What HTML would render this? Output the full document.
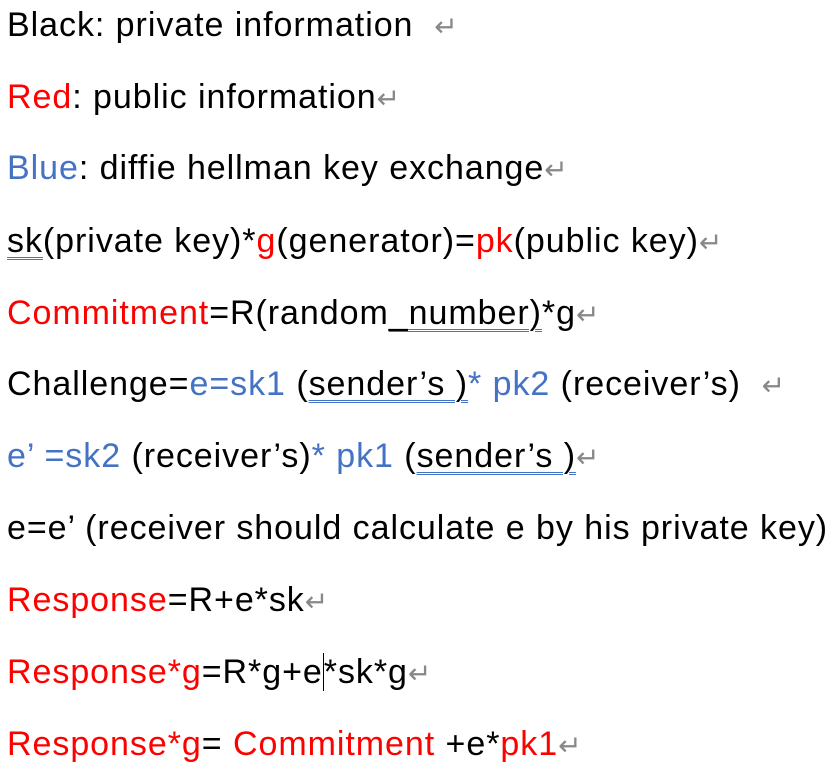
<!DOCTYPE html>
<html><head><meta charset="utf-8"><style>
html,body{margin:0;padding:0;background:#fff;width:832px;height:773px;overflow:hidden}
.l{position:absolute;left:7px;height:72px;line-height:72px;font-family:"Liberation Sans",Carlito,sans-serif;font-size:34px;color:#000;white-space:nowrap;letter-spacing:0.95px}
.r{color:#ff0000}.b{color:#4472c4}
.m{color:#888;font-size:28px}
.u{text-decoration:underline double #4472c4;text-decoration-thickness:1px;text-underline-offset:5px}
.cur{border-left:1.5px solid #000}
</style></head><body>
<div class="l" style="top:-11px">Black: private information &nbsp;<span class="m">↵</span></div>
<div class="l" style="top:61px"><span class="r">Red</span>: public information<span class="m">↵</span></div>
<div class="l" style="top:132px"><span class="b">Blue</span>: diffie hellman key exchange<span class="m">↵</span></div>
<div class="l" style="top:205px"><span class="u">sk</span>(private key)*<span class="r">g</span>(generator)=<span class="r">pk</span>(public key)<span class="m">↵</span></div>
<div class="l" style="top:277px"><span class="r">Commitment</span>=R(random<span class="u">_number)</span>*g<span class="m">↵</span></div>
<div class="l" style="top:348px">Challenge=<span class="b">e=sk1</span> (<span class="u">sender’s )</span><span class="b">* pk2</span> (receiver’s) &nbsp;<span class="m">↵</span></div>
<div class="l" style="top:420px"><span class="b">e’ =sk2</span> (receiver’s)<span class="b">* pk1</span> (<span class="u">sender’s )</span><span class="m">↵</span></div>
<div class="l" style="top:492px">e=e’ (receiver should calculate e by his private key)</div>
<div class="l" style="top:564px"><span class="r">Response</span>=R+e*sk<span class="m">↵</span></div>
<div class="l" style="top:636px"><span class="r">Response*g</span>=R*g+e<span class="cur"></span>*sk*g<span class="m">↵</span></div>
<div class="l" style="top:708px"><span class="r">Response*g</span>= <span class="r">Commitment</span> +e*<span class="r">pk1</span><span class="m">↵</span></div>
</body></html>
